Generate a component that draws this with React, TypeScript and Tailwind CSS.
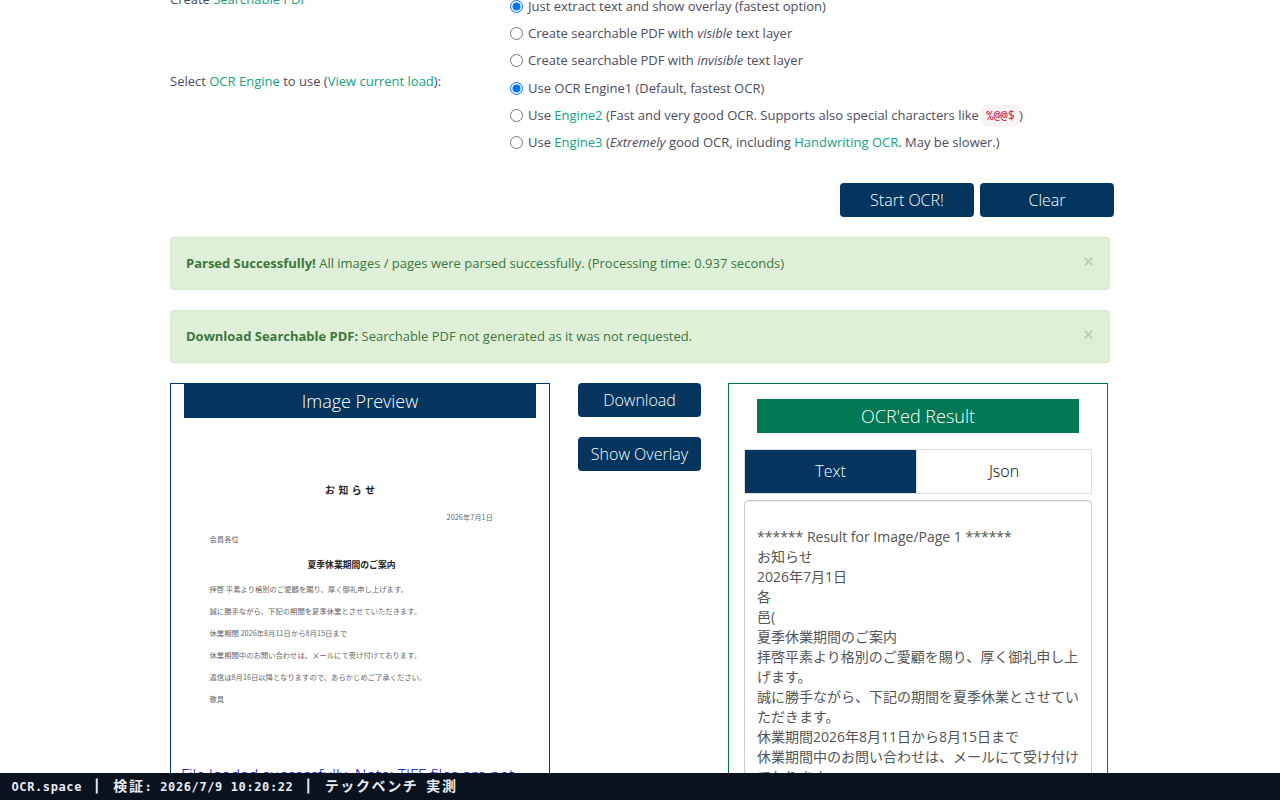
import type { ReactNode } from "react";

function Radio({ checked = false }: { checked?: boolean }) {
  return (
    <svg className="block h-[13px] w-[13px] shrink-0" viewBox="0 0 13 13">
      <circle cx="6.5" cy="6.5" r="6" fill="#fff" stroke={checked ? "#0075ff" : "#767676"} />
      {checked && <circle cx="6.5" cy="6.5" r="4" fill="#0075ff" />}
    </svg>
  );
}

function Link({ children }: { children: ReactNode }) {
  return <a className="text-[#18a084]">{children}</a>;
}

function Option({ checked, children }: { checked?: boolean; children: ReactNode }) {
  return (
    <label className="flex h-[27px] items-center gap-[5px]">
      <Radio checked={checked} />
      <span className="pb-px leading-5 tracking-[-0.008px] whitespace-pre">{children}</span>
    </label>
  );
}

function Button({ children, className }: { children: ReactNode; className: string }) {
  return (
    <button className={`h-[34px] rounded-[4px] bg-[#03355f] text-center text-[16px] leading-[34px] font-light whitespace-nowrap text-white ${className}`}>
      {children}
    </button>
  );
}

function Alert({ title, children }: { title: string; children: ReactNode }) {
  return (
    <div className="mb-5 flex h-[53px] w-[940px] items-center justify-between rounded-[4px] border border-[#d6e9c6] bg-[#dff0d8] px-[15px] text-[#3c763d]">
      <p className="pb-[2px] leading-5 tracking-[-0.008px] whitespace-pre">
        <b className="font-bold">{title}</b> {children}
      </p>
      <svg className="mr-[1px] mb-[4px] h-[9px] w-[9px]" viewBox="0 0 9 9" stroke="#bccbb6" strokeWidth="2" fill="none">
        <path d="M.8.8 8.2 8.2M8.2.8.8 8.2" />
      </svg>
    </div>
  );
}

const letter = [
  "拝啓 平素より格別のご愛顧を賜り、厚く御礼申し上げます。",
  "誠に勝手ながら、下記の期間を夏季休業とさせていただきます。",
  "休業期間 2026年8月11日から8月15日まで",
  "休業期間中のお問い合わせは、メールにて受け付けております。",
  "返信は8月16日以降となりますので、あらかじめご了承ください。",
  "敬具",
];

const result = [
  "****** Result for Image/Page 1 ******",
  "お知らせ",
  "2026年7月1日",
  "各",
  "邑(",
  "夏季休業期間のご案内",
  "拝啓平素より格別のご愛顧を賜り、厚く御礼申し上",
  "げます。",
  "誠に勝手ながら、下記の期間を夏季休業とさせてい",
  "ただきます。",
  "休業期間2026年8月11日から8月15日まで",
  "休業期間中のお問い合わせは、メールにて受け付け",
  "ております。",
];

function ImagePreview() {
  return (
    <section className="h-[500px] w-[380px] border border-[#03355f]">
      <h2 className="mx-[13px] h-[34px] bg-[#03355f] text-center text-[18px] leading-[35px] font-light text-white">Image Preview</h2>
      <div className="h-[345px] px-[38.5px] pt-[61px] font-['Noto_Sans_CJK_JP',sans-serif] text-[7.33px] leading-[22px] whitespace-nowrap text-[#666]">
        <p className="pl-[115.5px] text-[9.8px] font-bold tracking-[0.7px] text-[#222]">お 知 ら せ</p>
        <p className="mt-[5px] pr-[17.5px] text-right">2026年7月1日</p>
        <p>会員各位</p>
        <p className="mt-[4px] mb-[2px] pl-[98px] text-[8.8px] font-bold text-[#222]">夏季休業期間のご案内</p>
        {letter.map((line) => (
          <p key={line}>{line}</p>
        ))}
      </div>
      <p className="pl-[10px] text-[16px] leading-[24px] font-light tracking-[-0.02px] whitespace-nowrap text-[#0000c8]">
        File loaded successfully. Note: TIFF files are not
      </p>
    </section>
  );
}

function OcrResult() {
  return (
    <section className="h-[500px] w-[380px] border border-[#007453] px-[15px] pt-[15px]">
      <h2 className="mr-[13px] ml-[13px] h-[34px] w-[322px] bg-[#007853] text-center text-[18px] leading-[35px] font-light text-white">OCR'ed Result</h2>
      <div className="mt-4 flex h-[45px] border border-[#ddd] text-center text-[16px] leading-[43px] font-light">
        <div className="w-[171px] bg-[#03355f] text-white">Text</div>
        <div className="flex-1 border-l border-[#ddd] text-black">Json</div>
      </div>
      <div className="mt-[6px] h-[400px] rounded-[4px] border border-[#ccc] px-3 pt-[26px] font-['Open_Sans','Noto_Sans_CJK_JP',sans-serif] text-[14px] text-[#555] shadow-[inset_0_1px_1px_rgba(0,0,0,0.075)]">
        {result.map((line) => (
          <p key={line} className="h-5 leading-5 whitespace-nowrap">{line}</p>
        ))}
      </div>
    </section>
  );
}

function Wide({ children }: { children: ReactNode }) {
  return <span className="text-[14px] tracking-[1.62px]">{children}</span>;
}

function Bar() {
  return <span className="text-[14px] tracking-[1.62px] [-webkit-text-stroke:1px_#e8edf5]">｜</span>;
}

export default function App() {
  return (
    <div className="flex h-[800px] flex-col overflow-hidden bg-white font-['Open_Sans','Noto_Sans_CJK_JP',sans-serif] text-[13px] text-[#4c4c5c]">
      <main className="mx-auto min-h-0 w-[948px] flex-1 overflow-hidden px-1">
        <div className="-mt-[7px] flex h-[82px]">
          <p className="w-[340px] leading-[12px] tracking-[-0.02px]">Create <Link>Searchable PDF</Link></p>
          <div>
            <Option checked>Just extract text and show overlay (fastest option)</Option>
            <Option>Create searchable PDF with <i>visible</i> text layer</Option>
            <Option>Create searchable PDF with <i>invisible</i> text layer</Option>
          </div>
        </div>
        <div className="flex h-[108px]">
          <p className="w-[340px] pt-[3px] leading-[7px]">
            Select <Link>OCR Engine</Link> to use (<Link>View current load</Link>):
          </p>
          <div>
            <Option checked>Use OCR Engine1 (Default, fastest OCR)</Option>
            <Option>
              Use <Link>Engine2</Link> (Fast and very good OCR. Supports also special characters like{" "}
              <code className="rounded-[4px] bg-[#f9f2f4] px-1 py-[2px] font-['Noto_Sans_Mono','DejaVu_Sans_Mono',monospace] text-[12px] text-[#c7254e]">%@@$</code>)
            </Option>
            <Option>
              Use <Link>Engine3</Link> (<i>Extremely</i> good OCR, including <Link>Handwriting OCR</Link>. May be slower.)
            </Option>
          </div>
        </div>
        <div className="-mr-1 mb-5 flex justify-end gap-[6px]">
          <Button className="w-[134px]">Start OCR!</Button>
          <Button className="w-[134px]">Clear</Button>
        </div>
        <Alert title="Parsed Successfully!">All images / pages were parsed successfully. (Processing time: 0.937 seconds)</Alert>
        <Alert title="Download Searchable PDF:">Searchable PDF not generated as it was not requested.</Alert>
        <div className="flex items-start">
          <ImagePreview />
          <div className="mr-[27px] ml-7 flex w-[123px] flex-col gap-5">
            <Button className="w-[123px]">Download</Button>
            <Button className="w-[123px]">Show Overlay</Button>
          </div>
          <OcrResult />
        </div>
      </main>
      <footer className="h-[27px] shrink-0 overflow-hidden bg-[#0a121f] pl-[11.5px] font-['DejaVu_Sans_Mono','Noto_Sans_CJK_JP',monospace] text-[12px] leading-[27px] font-bold tracking-[0.61px] whitespace-pre text-[#e8edf5]">
        OCR.space <Bar /> <Wide>検証</Wide>: 2026/7/9 10:20:22 <Bar /> <Wide>テックベンチ</Wide> <Wide>実測</Wide>
      </footer>
    </div>
  );
}
